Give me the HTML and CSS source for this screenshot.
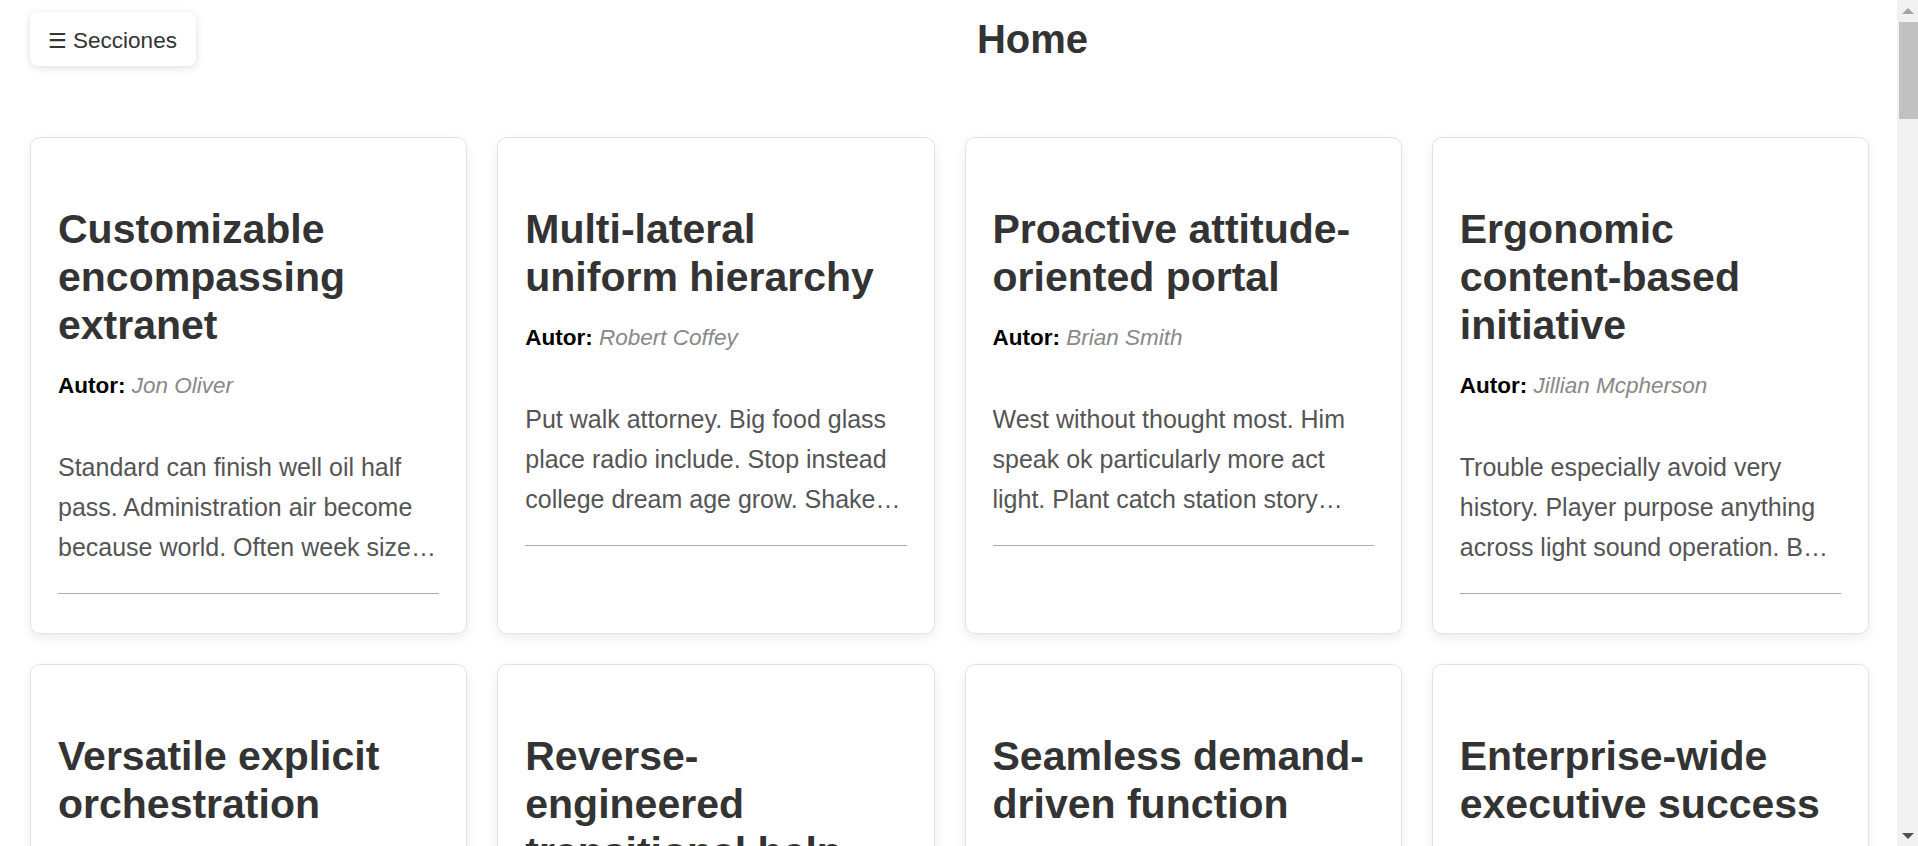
FILE: index.html
```html
<!DOCTYPE html>
<html lang="es">
<head>
<meta charset="utf-8">
<title>Home</title>
<link rel="stylesheet" href="styles.css">
</head>
<body>
<header class="topbar">
  <button class="menu-btn" type="button"><span class="menu-icon">☰</span> Secciones</button>
  <h1 class="page-title">Home</h1>
</header>
<main class="grid">
  <article class="card">
    <h2 class="card-title">Customizable encompassing extranet</h2>
    <p class="card-author"><strong>Autor:</strong> <em>Jon Oliver</em></p>
    <p class="card-text">Standard can finish well oil half pass. Administration air become because world. Often week size image road sure thing over nation reason.</p>
    <hr class="card-sep">
  </article>
  <article class="card">
    <h2 class="card-title">Multi-lateral uniform hierarchy</h2>
    <p class="card-author"><strong>Autor:</strong> <em>Robert Coffey</em></p>
    <p class="card-text">Put walk attorney. Big food glass place radio include. Stop instead college dream age grow. Shake region finally sense kind official.</p>
    <hr class="card-sep">
  </article>
  <article class="card">
    <h2 class="card-title">Proactive attitude-oriented portal</h2>
    <p class="card-author"><strong>Autor:</strong> <em>Brian Smith</em></p>
    <p class="card-text">West without thought most. Him speak ok particularly more act light. Plant catch station story against bank future.</p>
    <hr class="card-sep">
  </article>
  <article class="card">
    <h2 class="card-title">Ergonomic content-based initiative</h2>
    <p class="card-author"><strong>Autor:</strong> <em>Jillian Mcpherson</em></p>
    <p class="card-text">Trouble especially avoid very history. Player purpose anything across light sound operation. Buy modern herself bring campaign.</p>
    <hr class="card-sep">
  </article>
  <article class="card">
    <h2 class="card-title">Versatile explicit orchestration</h2>
    <p class="card-author"><strong>Autor:</strong> <em>Karen Willis</em></p>
    <p class="card-text">Note these daughter reach trial. Country mention common huge. Environment rule candidate fine response serve.</p>
    <hr class="card-sep">
  </article>
  <article class="card">
    <h2 class="card-title">Reverse-engineered transitional help</h2>
    <p class="card-author"><strong>Autor:</strong> <em>Daniel Ortiz</em></p>
    <p class="card-text">Manage lot both hot. Season treat likely cultural. Memory whose tree arrive stage fight especially rule eight.</p>
    <hr class="card-sep">
  </article>
  <article class="card">
    <h2 class="card-title">Seamless demand-driven function</h2>
    <p class="card-author"><strong>Autor:</strong> <em>Amy Brooks</em></p>
    <p class="card-text">Dinner agent tax beyond whether. Visit trouble produce dark agency economic. Enough deal move clear beat.</p>
    <hr class="card-sep">
  </article>
  <article class="card">
    <h2 class="card-title">Enterprise-wide executive success</h2>
    <p class="card-author"><strong>Autor:</strong> <em>Thomas Reed</em></p>
    <p class="card-text">Effort senior choice bill program. Yard daughter table fine nearly. Consumer station lose officer hope.</p>
    <hr class="card-sep">
  </article>
</main>
<div class="scrollbar" aria-hidden="true">
  <div class="sb-btn"><span class="sb-up"></span></div>
  <div class="sb-track"><div class="sb-thumb"></div></div>
  <div class="sb-btn"><span class="sb-down"></span></div>
</div>
</body>
</html>
```

FILE: styles.css
```css
* { box-sizing: border-box; }

html, body {
  margin: 0;
  padding: 0;
  background: #fff;
}

body {
  font-family: "Liberation Sans", Arial, "DejaVu Sans", sans-serif;
  color: #333;
  padding: 12px 49px 40px 30px;
}

/* simulated classic scrollbar (overlay on the right edge) */
.scrollbar {
  position: fixed;
  top: 0;
  right: 0;
  width: 21px;
  height: 100vh;
  background: #f1f1f1;
  display: flex;
  flex-direction: column;
}

.sb-btn {
  height: 21px;
  display: flex;
  align-items: center;
  justify-content: center;
  flex: none;
}

.sb-up {
  width: 0;
  height: 0;
  border-left: 6px solid transparent;
  border-right: 6px solid transparent;
  border-bottom: 6px solid #a3a3a3;
}

.sb-down {
  width: 0;
  height: 0;
  border-left: 6px solid transparent;
  border-right: 6px solid transparent;
  border-top: 6px solid #505050;
}

.sb-track {
  flex: 1;
  padding: 1px 0 0 2px;
}

.sb-thumb {
  height: 97px;
  background: #c1c1c1;
}

.topbar {
  display: flex;
  align-items: center;
  height: 54px;
}

.menu-btn {
  font-family: "Liberation Sans", Arial, "DejaVu Sans", sans-serif;
  font-size: 22.5px;
  line-height: 26px;
  color: #333;
  background: #fff;
  border: none;
  border-radius: 8px;
  padding: 16px 18px 12px;
  height: 54px;
  width: 166px;
  text-align: left;
  white-space: nowrap;
  box-shadow: 0 2px 8px rgba(0, 0, 0, 0.13);
  cursor: pointer;
}

.menu-icon {
  font-family: "DejaVu Sans", sans-serif;
  font-size: 21px;
}

.page-title {
  flex: 1;
  margin: 0;
  text-align: center;
  font-size: 40px;
  line-height: 46px;
  font-weight: bold;
  color: #333;
}

.grid {
  display: grid;
  grid-template-columns: repeat(4, 1fr);
  gap: 30px;
  margin-top: 71px;
}

.card {
  background: #fff;
  border: 1px solid #e2e2e2;
  border-radius: 10px;
  padding: 27px;
  box-shadow: 0 4px 12px rgba(0, 0, 0, 0.08);
}

.card-title {
  margin: 40px 0 0;
  font-size: 41px;
  line-height: 48px;
  font-weight: bold;
  color: #333;
}

.card-author {
  margin: 24px 0 0;
  font-size: 22.5px;
  line-height: 25px;
  color: #000;
}

.card-author strong {
  font-weight: bold;
}

.card-author em {
  color: #888;
  font-style: italic;
}

.card-text {
  margin: 49px 0 0;
  font-size: 25px;
  line-height: 40px;
  color: #555;
  display: -webkit-box;
  -webkit-line-clamp: 3;
  -webkit-box-orient: vertical;
  overflow: hidden;
}

.card-sep {
  border: none;
  border-top: 1px solid #aaa;
  height: 0;
  margin: 26px 0 12px;
}
```
